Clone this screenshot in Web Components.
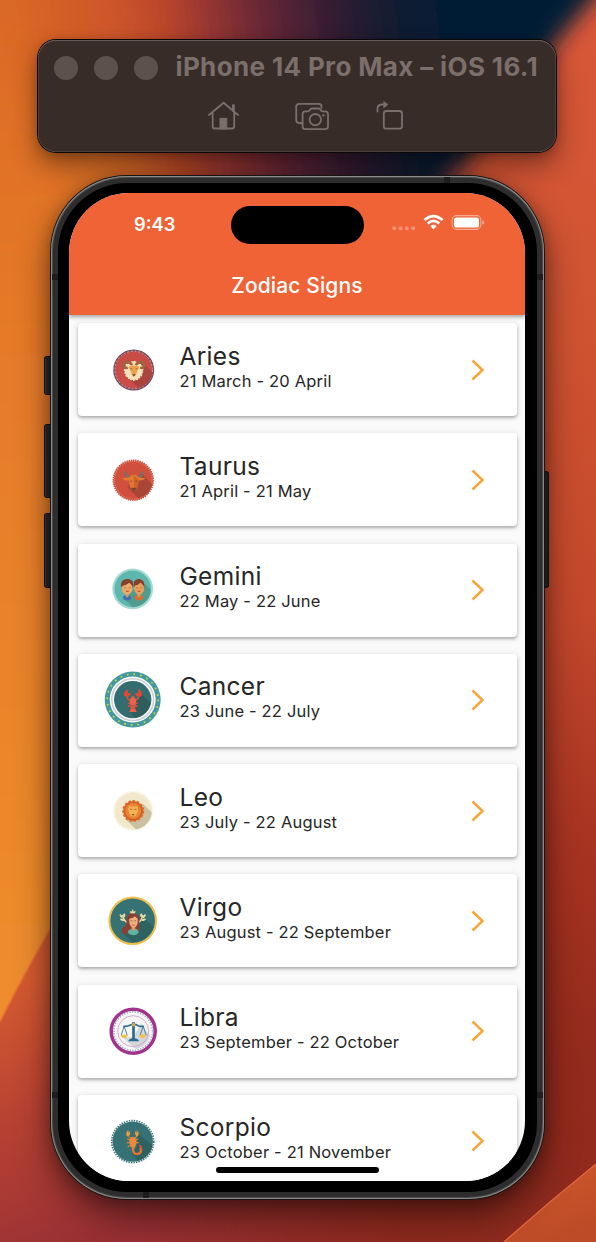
<!DOCTYPE html>
<html lang="en">
<head>
<meta charset="utf-8">
<title>Zodiac Signs</title>
<style>
html,body{margin:0;height:100%;overflow:hidden}
body{font-family:Inter,"Noto Sans",sans-serif}
</style>
</head>
<body>
<zodiac-desktop>
  <simulator-toolbar>iPhone 14 Pro Max – iOS 16.1</simulator-toolbar>
  <phone-frame>
    <status-bar slot="status">9:43</status-bar>
    <app-bar>Zodiac Signs</app-bar>
    <sign-list>
      <sign-card sign="aries"><span slot="name">Aries</span><span slot="dates">21 March - 20 April</span></sign-card>
      <sign-card sign="taurus"><span slot="name">Taurus</span><span slot="dates">21 April - 21 May</span></sign-card>
      <sign-card sign="gemini"><span slot="name">Gemini</span><span slot="dates">22 May - 22 June</span></sign-card>
      <sign-card sign="cancer"><span slot="name">Cancer</span><span slot="dates">23 June - 22 July</span></sign-card>
      <sign-card sign="leo"><span slot="name">Leo</span><span slot="dates">23 July - 22 August</span></sign-card>
      <sign-card sign="virgo"><span slot="name">Virgo</span><span slot="dates">23 August - 22 September</span></sign-card>
      <sign-card sign="libra"><span slot="name">Libra</span><span slot="dates">23 September - 22 October</span></sign-card>
      <sign-card sign="scorpio"><span slot="name">Scorpio</span><span slot="dates">23 October - 21 November</span></sign-card>
    </sign-list>
  </phone-frame>
</zodiac-desktop>
<script>
function define(name, html, ready) {
  const t = document.createElement('template');
  t.innerHTML = html;
  customElements.define(name, class extends HTMLElement {
    constructor() {
      super();
      this.attachShadow({mode: 'open'}).append(t.content.cloneNode(true));
    }
    connectedCallback() { if (ready) ready(this, this.shadowRoot); }
  });
}

define('zodiac-desktop', `
<style>
:host{display:flex;flex-direction:column;align-items:flex-start;box-sizing:border-box;width:596px;height:1242px;padding:40px 0 0;position:relative;overflow:hidden;isolation:isolate}
.wall{position:absolute;inset:0;z-index:-1}
</style>
<svg class="wall" width="596" height="1242" viewBox="0 0 596 1242">
  <defs>
    <linearGradient id="base" x1="0" y1="0" x2="0" y2="1">
      <stop offset="0" stop-color="#d8583a"/><stop offset=".27" stop-color="#cf5331"/><stop offset=".5" stop-color="#c2472b"/><stop offset=".68" stop-color="#a73321"/><stop offset=".85" stop-color="#942b1d"/><stop offset="1" stop-color="#8e2a1e"/>
    </linearGradient>
    <linearGradient id="left" gradientUnits="userSpaceOnUse" x1="0" y1="0" x2="0" y2="1020">
      <stop offset="0" stop-color="#dc6a27"/><stop offset=".3" stop-color="#e57928"/><stop offset="1" stop-color="#ee8d2d"/>
    </linearGradient>
    <linearGradient id="top" gradientUnits="userSpaceOnUse" x1="0" y1="0" x2="450" y2="-65">
      <stop offset="0" stop-color="#dc6a27"/><stop offset=".25" stop-color="#cd5529"/><stop offset=".36" stop-color="#b9452c"/><stop offset=".46" stop-color="#923432"/><stop offset=".58" stop-color="#612636"/><stop offset=".72" stop-color="#331d33"/><stop offset=".85" stop-color="#121b33"/><stop offset=".95" stop-color="#061b34"/>
    </linearGradient>
    <linearGradient id="low" gradientUnits="userSpaceOnUse" x1="0" y1="990" x2="90" y2="1242">
      <stop offset="0" stop-color="#d45a30"/><stop offset=".45" stop-color="#b94333"/><stop offset="1" stop-color="#9a3034"/>
    </linearGradient>
    <linearGradient id="fade" x1="0" y1="0" x2="1" y2="0"><stop offset="0" stop-color="#fff"/><stop offset=".35" stop-color="#fff"/><stop offset="1" stop-color="#000"/></linearGradient>
    <mask id="m"><rect y="880" width="400" height="400" fill="url(#fade)"/></mask>
    <linearGradient id="tri" x1="0" y1="0" x2=".5" y2="1"><stop offset="0" stop-color="#d15a2b"/><stop offset="1" stop-color="#bd4b27"/></linearGradient>
    <filter id="b25" x="-30%" y="-30%" width="160%" height="160%"><feGaussianBlur stdDeviation="24"/></filter>
    <filter id="b9" x="-30%" y="-30%" width="160%" height="160%"><feGaussianBlur stdDeviation="11"/></filter>
  </defs>
  <rect width="596" height="1242" fill="url(#base)"/>
  <path d="M-60-60H640L596-5Q548 50 500 115Q470 160 430 200L180 330L-60 500Z" fill="url(#top)" filter="url(#b9)"/>
  <path d="M-90 50L80 95L170 200L230 300V600L130 1080L-90 1150Z" fill="url(#left)" filter="url(#b25)"/>
  <path d="M0 1022Q30 962 70 895H400V1242H0Z" fill="url(#low)" mask="url(#m)"/>
  <path d="M0 1022Q30 962 70 895" fill="none" stroke="#e46d35" stroke-width="2" opacity=".7"/>
  <path d="M504 1242Q550 1201 596 1164V1242Z" fill="url(#tri)"/>
  <path d="M504 1242Q550 1201 596 1164" fill="none" stroke="#e56a45" stroke-width="1.3"/>
</svg>
<slot></slot>`);

define('simulator-toolbar', `
<style>
:host{display:flex;flex-direction:column;box-sizing:border-box;width:518px;height:112px;margin-left:38px;padding:11px 15.5px 0;border-radius:18px;background:#382c29;color:#7b6f6c;box-shadow:0 0 0 1px #0c0807,inset 0 1px 0 #665b58,inset 0 0 0 .6px #5b504c,0 14px 28px rgba(0,0,0,.4),0 2px 12px rgba(0,0,0,.22)}
.title{display:flex;align-items:center;height:33px;white-space:nowrap;font-weight:700;font-size:26px;letter-spacing:.36px}
.title span{position:relative;top:-1px}
i{width:24px;height:24px;border-radius:50%;background:#5d514e;margin-right:16px;flex:none}
i:nth-of-type(3){margin-right:18px}
.icons{display:flex;padding-left:154px;margin-top:16px;height:32px}
svg{fill:none;stroke:#7b6f6c;stroke-width:1.8;stroke-linecap:round;stroke-linejoin:round;flex:none}
.cam{margin-left:56px}.rot{margin-left:47px}
</style>
<div class="title"><i></i><i></i><i></i><span><slot></slot></span></div>
<div class="icons">
  <svg width="31" height="32" viewBox="0 0 31 32"><path d="M1 15L15.600 2.800L30 15M25.600 10.500V5.200M4.700 13V26.500Q4.700 28.500 6.700 28.500H24.200Q26.200 28.500 26.200 26.500V13"/><path d="M12 28.500V18.400H18.800V28.500Z" fill="#7b6f6c" stroke-width="1"/><path d="M25.300 5.500V11" stroke-width="2.400"/></svg>
  <svg class="cam" width="34" height="32" viewBox="0 0 34 32"><path d="M26.500 7.900V6.500Q26.500 3.900 24 3.900H4Q1.200 3.900 1.200 6.500V19.800Q1.200 23 4 23H6.400"/><path d="M10.300 11.300H13Q14 11.300 14.600 10.300Q15.600 8.500 17 8.500H23.500Q25 8.500 26 10.300Q26.500 11.300 27.600 11.300H30Q33 11.300 33 14V26.500Q33 29.200 30 29.200H10.300Q7.600 29.200 7.600 26.500V14Q7.600 11.300 10.300 11.300Z"/><circle cx="20.300" cy="19.700" r="5.700"/><circle cx="28.300" cy="15.300" r=".9" fill="#7b6f6c" stroke-width=".8"/></svg>
  <svg class="rot" width="28" height="32" viewBox="0 0 28 32"><rect x="7.800" y="11" width="18.200" height="17.700" rx="2.500"/><path d="M1.500 11.500V9Q1.500 4.500 6.200 4.500H9.500"/><path d="M8 1.900L12 4.500L8 7.500Z" fill="#7b6f6c" stroke-width=".8"/></svg>
</div>`);

define('phone-frame', `
<style>
:host{display:block;position:relative;box-sizing:border-box;width:493px;height:1023px;margin:23.5px 0 0 50.5px;padding:17.5px 18.5px;border-radius:76px;background:#000;box-shadow:0 0 0 1px #171413,inset 0 0 0 1px #8b8987,inset 0 0 0 2px #4b4a49,inset 0 0 0 7px #2d2d2d,0 18px 36px rgba(0,0,0,.44),0 2px 18px rgba(0,0,0,.34)}
.screen{display:flex;flex-direction:column;height:988px;border-radius:60px;overflow:hidden;background:#fafafa;position:relative;width:456px}
.key{position:absolute;z-index:-1;width:8px;background:#2a2828;box-shadow:0 0 0 1px #151211,inset 1px 0 #45403e;border-radius:2px}
.seam{position:absolute;background:#1d1d1d}
.home{position:absolute;left:146.5px;bottom:8.5px;width:163px;height:5.5px;border-radius:3px;background:#000}
.island{position:absolute;left:161.5px;top:12.5px;width:133px;height:38.5px;border-radius:20px;background:#000;z-index:4}
</style>
<div class="key" style="left:-6px;top:181px;height:37px"></div>
<div class="key" style="left:-6px;top:249px;height:72px"></div>
<div class="key" style="left:-6px;top:338px;height:73px"></div>
<div class="key" style="right:-4.5px;top:296px;height:115px"></div>
<div class="seam" style="left:1px;top:98px;width:6px;height:6px"></div>
<div class="seam" style="right:1px;top:98px;width:6px;height:6px"></div>
<div class="seam" style="left:1px;bottom:101px;width:6px;height:6px"></div>
<div class="seam" style="right:1px;bottom:101px;width:6px;height:6px"></div>
<div class="seam" style="right:94px;top:1px;width:6px;height:6px"></div>
<div class="seam" style="left:92px;bottom:1px;width:6px;height:6px"></div>
<div class="screen"><slot name="status"></slot><slot></slot><div class="island"></div><div class="home"></div></div>`);

define('status-bar', `
<style>
:host{display:flex;justify-content:space-between;align-items:center;flex:none;box-sizing:border-box;height:62px;padding:0 40.5px 0 65px;background:#ef6337;color:#fff;font-weight:600;font-size:18.300px;position:relative;z-index:3}
svg{display:block;margin-top:-2px}
</style>
<span><slot></slot></span>
<svg width="94" height="20" viewBox="0 0 94 20">
  <g fill="#fff" opacity=".3"><circle cx="3.300" cy="15.300" r="2"/><circle cx="9.600" cy="15.300" r="2"/><circle cx="15.900" cy="15.300" r="2"/><circle cx="22.200" cy="15.300" r="2"/></g>
  <g fill="none" stroke="#fff" stroke-width="2.700"><path d="M33.400 7.100Q42.500-.9 51.600 7.100"/><path d="M36.700 10.500Q42.500 5.400 48.300 10.500"/></g>
  <path d="M39.300 13Q42.500 10.500 45.700 13L42.500 16.400Z" fill="#fff"/>
  <rect x="61.200" y="2.600" width="28.600" height="13.800" rx="4.300" fill="none" stroke="#fff" stroke-opacity=".45" stroke-width="1.100"/>
  <rect x="63" y="4.400" width="25" height="10.200" rx="2.600" fill="#fff"/><path d="M91.300 7.200Q93.200 8 93.200 9.500Q93.200 11 91.300 11.800Z" fill="#fff" opacity=".5"/>
</svg>`);

define('app-bar', `
<style>
:host{display:flex;align-items:center;justify-content:center;flex:none;height:60px;background:#ef6337;color:#fff;font-weight:500;font-size:21px;letter-spacing:.12px;box-shadow:0 2px 4px rgba(0,0,0,.35);z-index:2;position:relative}
</style><span><slot></slot></span>`);

define('sign-list', `
<style>
:host{display:flex;flex-direction:column;gap:17.25px;flex:none;padding:8px 8.5px 0 9px}
</style><slot></slot>`);

const ART = {
aries: `<g transform="translate(.7)"><circle cx="30" cy="30" r="20.500" fill="#714b61"/><circle cx="30" cy="30" r="18.800" fill="#c94c47" stroke="#d4a5a8" stroke-width="1" stroke-dasharray="2 1.700"/>
<path d="M38 22L49 33A19 19 0 0 1 35 48L22 36Z" fill="#a9443e"/><path d="M30 21.500l4 1.500 4 2.500 1 5-1.500 5-3.500 3.500-4 1-4-1-3.500-3.500-1.500-5 1-5 4-2.500Z" fill="#f4e1bb" stroke="#f4e1bb" stroke-width="1.800" stroke-dasharray="2 1"/>
<path d="M28.500 25C25 20.500 19.500 21.500 20 25.500Q20.800 28.800 24 27.500M32 25C35.500 20.500 41 21.500 40.500 25.500Q39.700 28.800 36.500 27.500" fill="none" stroke="#9b6540" stroke-width="2.700"/><path d="M24.500 27L28 25.500H32.500L36 27L34 30L32.500 34.500L30.200 37L28 34.500L26.500 30Z" fill="#eda451"/><path d="M28.300 34.300h3.800l-1.900 2.200Z" fill="#76402f"/><path d="M26.500 28.800h2M32 28.800h2" stroke="#a36a35"/></g>`,
taurus: `<g transform="translate(.3 .2)"><circle cx="30" cy="30" r="19.800" fill="#d1503d"/><circle cx="30" cy="30" r="19.800" fill="none" stroke="#d1503d" stroke-width="1.900" stroke-dasharray="1.300 .9"/><circle cx="30" cy="30" r="18.700" fill="none" stroke="#e58a73" stroke-width="1" stroke-dasharray="1.100 1"/>
<path d="M38 23L49 34A19 19 0 0 1 35 48L24 37Z" fill="#aa4637"/><path d="M22 21.500Q21.500 27 26.500 27M39 21.500Q39.500 27 34.500 27" fill="none" stroke="#78706b" stroke-width="2.500"/><path d="M19 28L26 27L28.500 24.500H32.500L35 27L42 28Q39.500 31 35.500 30L34 37L32 40.500H28.500L27 37L25.500 30Q21.500 31 19 28Z" fill="#e37a32"/><path d="M30.500 24.500V40.500H32L34 37L35.500 30Z" fill="#cf632c"/><path d="M27.500 37.500h5.800l-1.500 3h-3Z" fill="#7c4237"/><path d="M27 31h2M32 31h2" stroke="#8c4a2c"/></g>`,
gemini: `<g transform="translate(-.3 -1.100)"><circle cx="30" cy="30" r="20.400" fill="#a8dad3"/><circle cx="30" cy="30" r="18.300" fill="#5db7ae" stroke="#7dc8c0" stroke-width=".8" stroke-dasharray="1 1"/><path d="M41 24L48 31A18 18 0 0 1 30 48L20 38Z" fill="#519b90"/>
<path d="M20 38Q24.500 34 29 38Q27.500 41.500 24.500 41.500Q21 41.500 20 38Z" fill="#416db2"/><path d="M31.500 38Q36 34 41 38Q39.500 41.500 36.300 41.500Q33 41.500 31.500 38Z" fill="#d96e2c"/><path d="M23 33h3v4.500q-1.500 1.500-3 0ZM34.800 33h3v4.500q-1.500 1.500-3 0Z" fill="#df9554"/>
<path d="M18.500 28Q17 20.500 24.500 20Q31.500 20 30 29ZM31 28Q30 20 36.500 20Q43 21 41.500 29Z" fill="#84402d"/><ellipse cx="24.500" cy="29.500" rx="5.300" ry="6.300" fill="#efac69"/><ellipse cx="36.500" cy="29.500" rx="4.900" ry="6.300" fill="#e9a25e"/><path d="M19 27Q24 26 27 23.500L30 27V22L25 20L20 22ZM31.500 26.500Q36 26 38 23.500L41 27L40 22L36 20L32 22Z" fill="#84402d"/><path d="M21.500 29h2m2.500 0h2m5.500 0h2m2 0h2" stroke="#b4713f"/><path d="M23.300 32.500h2.700m9 0h2.700" stroke="#d24f39" stroke-width="1.400"/></g>`,
cancer: `<g transform="translate(-.3 -.4)"><circle cx="30" cy="30" r="28" fill="#44999f"/><circle cx="30" cy="30" r="25.500" fill="none" stroke="#c9d63e" stroke-width="1.700" stroke-dasharray="1.700 4.976"/><circle cx="30" cy="30" r="23" fill="#fff"/><circle cx="30" cy="30" r="20.900" fill="#fff" stroke="#cdced0" stroke-width="1.600"/><circle cx="30" cy="30" r="18.700" fill="#336d70"/><path d="M37 23L48 34A18.500 18.500 0 0 1 32 48L26 40L34 30Z" fill="#305e5c"/>
<path d="M28 31Q24 30 24.500 26M32 31Q36 30 36 26M25.500 34L28 33M25 37l3-1M32 33l3 1M32 36l3 1" fill="none" stroke="#df4c39" stroke-width="1.600"/><path d="M24.500 19.500Q20.500 22 21.500 26.500Q26 29 28.500 24L25.500 23.500ZM36 19.500Q40 22 39 26.500Q34.500 29 32 24L35 23.500Z" fill="#e34736"/><path d="M30.200 26L33.500 30L32.500 39L34 42.500H26.500L28 39L27 30Z" fill="#ed604a"/><path d="M28 36h4.500m-4 2.500h4" stroke="#b83c33" stroke-width=".8"/></g>`,
leo: `<g transform="translate(.2)"><circle cx="30" cy="30" r="18.800" fill="#f2e8cb" stroke="#f4ecd5" stroke-width="2.500" stroke-dasharray="1.200 1.200"/><path d="M40 23L48.500 31.500A19 19 0 0 1 33 48.500L22 38Z" fill="#cac0a2"/><circle cx="30" cy="30" r="10" fill="#cf5d25" stroke="#df6b2b" stroke-width="2" stroke-dasharray="2.500 1.700"/><circle cx="30" cy="30" r="8" fill="#e98532"/><path d="M26 25L28 25.500H32L34 25L35 28L34 32L32 35.500H28L26 32L25 28Z" fill="#f1b354"/><path d="M26.800 28.300h2m2.500 0h2" stroke="#a9682f"/><path d="M28.500 33h3l-1.500 2Z" fill="#a94d2b"/></g>`,
virgo: `<g transform="translate(-.3 -.2)"><circle cx="30" cy="30" r="23.300" fill="#367174" stroke="#efbf4c" stroke-width="2"/><path d="M38 25L51 36A22.500 22.500 0 0 1 29 51L21 43Z" fill="#2d6260"/><path d="M20 24Q21 31 26 32M40 24Q39 31 34 32" fill="none" stroke="#efdb9d" stroke-width="1.500"/><g fill="#f0df9e"><ellipse cx="18.500" cy="25.500" rx="1" ry="2.300" transform="rotate(-35 18.500 25.500)"/><ellipse cx="21.500" cy="24.500" rx="1" ry="2"/><ellipse cx="19.500" cy="29" rx="1" ry="2.300" transform="rotate(-70 19.500 29)"/><ellipse cx="41.500" cy="25.500" rx="1" ry="2.300" transform="rotate(35 41.500 25.500)"/><ellipse cx="38.500" cy="24.500" rx="1" ry="2"/><ellipse cx="41" cy="29" rx="1" ry="2.300" transform="rotate(70 41 29)"/><path d="M27 20l2 1 1-3 1 3 2-1-1 3h-4Z"/></g><path d="M24 29Q24 22.500 30 22.500Q38 23 36.500 32L37 42H29Q26 44 20 43Q18 41 20 37Q24 36 24 29Z" fill="#894034"/><path d="M25 42Q25 39 29 38H33Q36 39 36 42Q31 47 25 42Z" fill="#5bb4a5"/><path d="M29 34h3.500v5q-1.700 2-3.500 0Z" fill="#d99664"/><path d="M26.500 28Q31 27 32 25.500L35 28V32Q34 36.500 30.500 37Q27 36 26.500 31Z" fill="#efae7d"/><path d="M27.700 30h2m2 0h1.700" stroke="#936049" stroke-width=".8"/><path d="M29.500 34.300h2.300" stroke="#c34b3c"/></g>`,
libra: `<g transform="translate(.2 .2)"><circle cx="30" cy="30" r="22" fill="#fff" stroke="#a1338e" stroke-width="3.500"/><circle cx="30" cy="30" r="19.300" fill="none" stroke="#a6b5c2" stroke-width="1.700" stroke-dasharray="1.500 1.200"/><circle cx="30" cy="30" r="18" fill="#f5f5f5"/><path d="M38 22L44 31L47 34A18 18 0 0 1 33 48L19 36L30 36Z" fill="#d5d8d8"/><circle cx="30" cy="30" r="15.500" fill="none" stroke="#d298c9" stroke-width=".8"/><g fill="none" stroke="#296c91"><path d="M20 25.500Q25 25 28 23.500H33Q36 26 40.500 25" stroke-width="1.700"/><path d="M21 25L18 34M21 25l3 9M40 25l-3 9m3-9 3 9" stroke-width=".8"/><path d="M30.300 21V38" stroke-width="2.700"/></g><path d="M25 40Q26 37 30.300 37Q35 37 36 40Z" fill="#296c91"/><path d="M17.500 33.500h7q-.5 3.300-3.500 3.300t-3.500-3.300ZM36 33.500h7q-.5 3.300-3.500 3.300t-3.500-3.300Z" fill="#f0be49"/><circle cx="30.300" cy="23.500" r="1.800" fill="#e5a83f"/></g>`,
scorpio: `<g transform="translate(-.3 .6)"><circle cx="30" cy="30" r="20.200" fill="#367275"/><circle cx="30" cy="30" r="21" fill="none" stroke="#367275" stroke-width="1.600" stroke-dasharray="1.400 1.150"/><path d="M35 22L50 34A20 20 0 0 1 35 49L29 42L34 36Z" fill="#2d6260"/><path d="M30.500 35Q29.500 42.500 34.500 42.500Q39.500 42 38 35.500" fill="none" stroke="#e67531" stroke-width="2.500"/><path d="M38.500 38Q39.500 34.500 36.500 33.500" fill="none" stroke="#e84c32" stroke-width="1.500"/><path d="M28.500 28.500L24.500 27.500M28.500 31l-4.500 0M28.500 33l-3.500 2.500M31.500 28.500l4-1M31.500 31l4.500 0M26.500 26L25.500 23M33 26l1.500-3" stroke="#e48133" stroke-width="1.200"/><path d="M25.500 18.500Q22 22 24.500 25Q29 24 26.500 19L26 22ZM34 18.500Q37.500 22 35 25Q31 24 33 19L34 22Z" fill="#f09a39"/><path d="M27.500 25.500h5l1.500 5-1.500 5-2.500 1-2-1-1.500-5Z" fill="#ed873b"/></g>`
};

define('zodiac-icon', `<style>:host{display:block;width:60px;height:60px;flex:none}svg{display:block}</style><svg width="60" height="60" viewBox="0 0 60 60"></svg>`,
  (el, root) => { root.querySelector('svg').innerHTML = ART[el.getAttribute('kind')] || ''; });

define('sign-card', `
<style>
:host{display:flex;align-items:center;box-sizing:border-box;height:93px;padding:0 31.5px 0 24.5px;background:#fff;border-radius:4px;color:#262626;box-shadow:0 2px 3px rgba(0,0,0,.24),0 1px 6px rgba(0,0,0,.13)}
.txt{flex:1;margin-left:17px;padding-bottom:6px;white-space:nowrap}
.name{font-size:24.500px;line-height:28px;letter-spacing:.3px;font-weight:400}
.dates{font-size:16.500px;line-height:22px;letter-spacing:.18px}
svg{flex:none}
</style>
<zodiac-icon></zodiac-icon>
<div class="txt"><div class="name"><slot name="name"></slot></div><div class="dates"><slot name="dates"></slot></div></div>
<svg width="14" height="24" viewBox="0 0 14 24"><path d="M1.500 2.500L11.500 12L1.500 21.500" fill="none" stroke="#f6a63c" stroke-width="2.500"/></svg>`,
  (el, root) => {
    const icon = root.querySelector('zodiac-icon');
    icon.setAttribute('kind', el.getAttribute('sign'));
    icon.shadowRoot.querySelector('svg').innerHTML = ART[el.getAttribute('sign')];
  });
</script>
</body>
</html>
